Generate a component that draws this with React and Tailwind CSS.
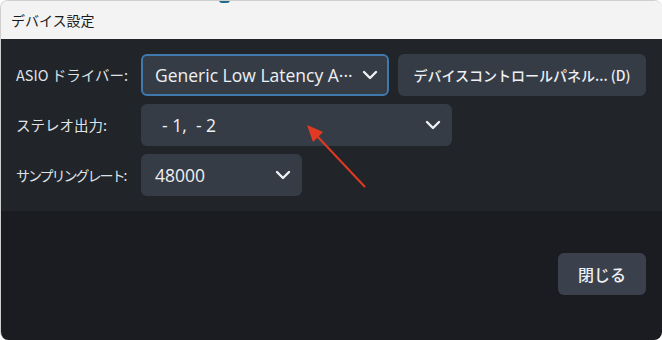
import React from 'react';

const jp = { fontFamily: '"Noto Sans CJK JP", "Noto Sans", sans-serif' };

function Chevron() {
	return (
		<svg width="16" height="10" viewBox="0 0 16 10" className="shrink-0">
			<polyline points="2,2 8,8 14,2" fill="none" stroke="#eef0f3" strokeWidth="2.4" strokeLinecap="round" strokeLinejoin="round" />
		</svg>
	);
}

function Select({ width, value, active, pad = 'pl-[14px]', chevronPad = 'pr-[11px]' }) {
	return (
		<div
			className={`flex h-[42px] shrink-0 items-center justify-between rounded-[6px] bg-[#363c46] ${pad} ${chevronPad} ${
				active ? 'border-2 border-[#3f79ad]' : ''
			}`}
			style={{ width }}
		>
			<span className="whitespace-pre text-[17.5px] font-medium text-[#eef0f3]" style={{ fontFamily: '"Open Sans", "Noto Sans CJK JP", sans-serif' }}>
				{value}
			</span>
			<Chevron />
		</div>
	);
}

export default function App() {
	return (
		<div className="h-[340px] w-[662px] bg-white" style={jp}>
			<div className="relative flex h-full w-full flex-col overflow-hidden rounded-[8px] border-l border-t border-[#cfcfcf]">
				<div className="absolute left-[218px] top-[-1px] h-[3px] w-[11px] rounded-b bg-[#1f6b8e]" />
				<div className="flex h-[38px] items-center bg-[#f3f3f3] pl-[10px] text-[14px] text-[#1b1b1b]">デバイス設定</div>

				<div className="flex flex-col gap-[8px] bg-[#212429] pb-[15px] pl-[15px] pt-[15px]">
					<div className="flex items-center">
						<span className="w-[125px] shrink-0 whitespace-nowrap text-[14.5px] text-[#dfe2e6]">ASIO ドライバー:</span>
						<Select width={248} value="Generic Low Latency A···" active chevronPad="pr-[9px]" pad="pl-[12px]" />
						<button className="ml-[9px] h-[42px] w-[248px] shrink-0 rounded-[6px] bg-[#363c46] text-[14px] font-medium text-[#eef0f3]">
							デバイスコントロールパネル... (D)
						</button>
					</div>
					<div className="flex items-center">
						<span className="w-[125px] shrink-0 whitespace-nowrap text-[14.5px] text-[#dfe2e6]">ステレオ出力:</span>
						<Select width={311} value={'  - 1,  - 2'} pad="pl-[12px]" />
					</div>
					<div className="flex items-center">
						<span className="w-[125px] shrink-0 whitespace-nowrap text-[14px] tracking-[-2px] text-[#dfe2e6]">サンプリングレート:</span>
						<Select width={161} value="48000" />
					</div>
				</div>

				<div className="flex flex-1 items-start justify-end bg-[#1a1c21] pr-[16px] pt-[42px]">
					<button className="h-[42px] w-[88px] rounded-[6px] bg-[#3a414c] text-[16px] font-medium text-[#eef0f3]">閉じる</button>
				</div>

				<svg className="pointer-events-none absolute left-0 top-0" width="662" height="340">
					<line x1="364" y1="186" x2="316" y2="135" stroke="#e23a22" strokeWidth="2" />
					<polygon points="306,124 322,131 312,141" fill="#e23a22" />
				</svg>
			</div>
		</div>
	);
}
